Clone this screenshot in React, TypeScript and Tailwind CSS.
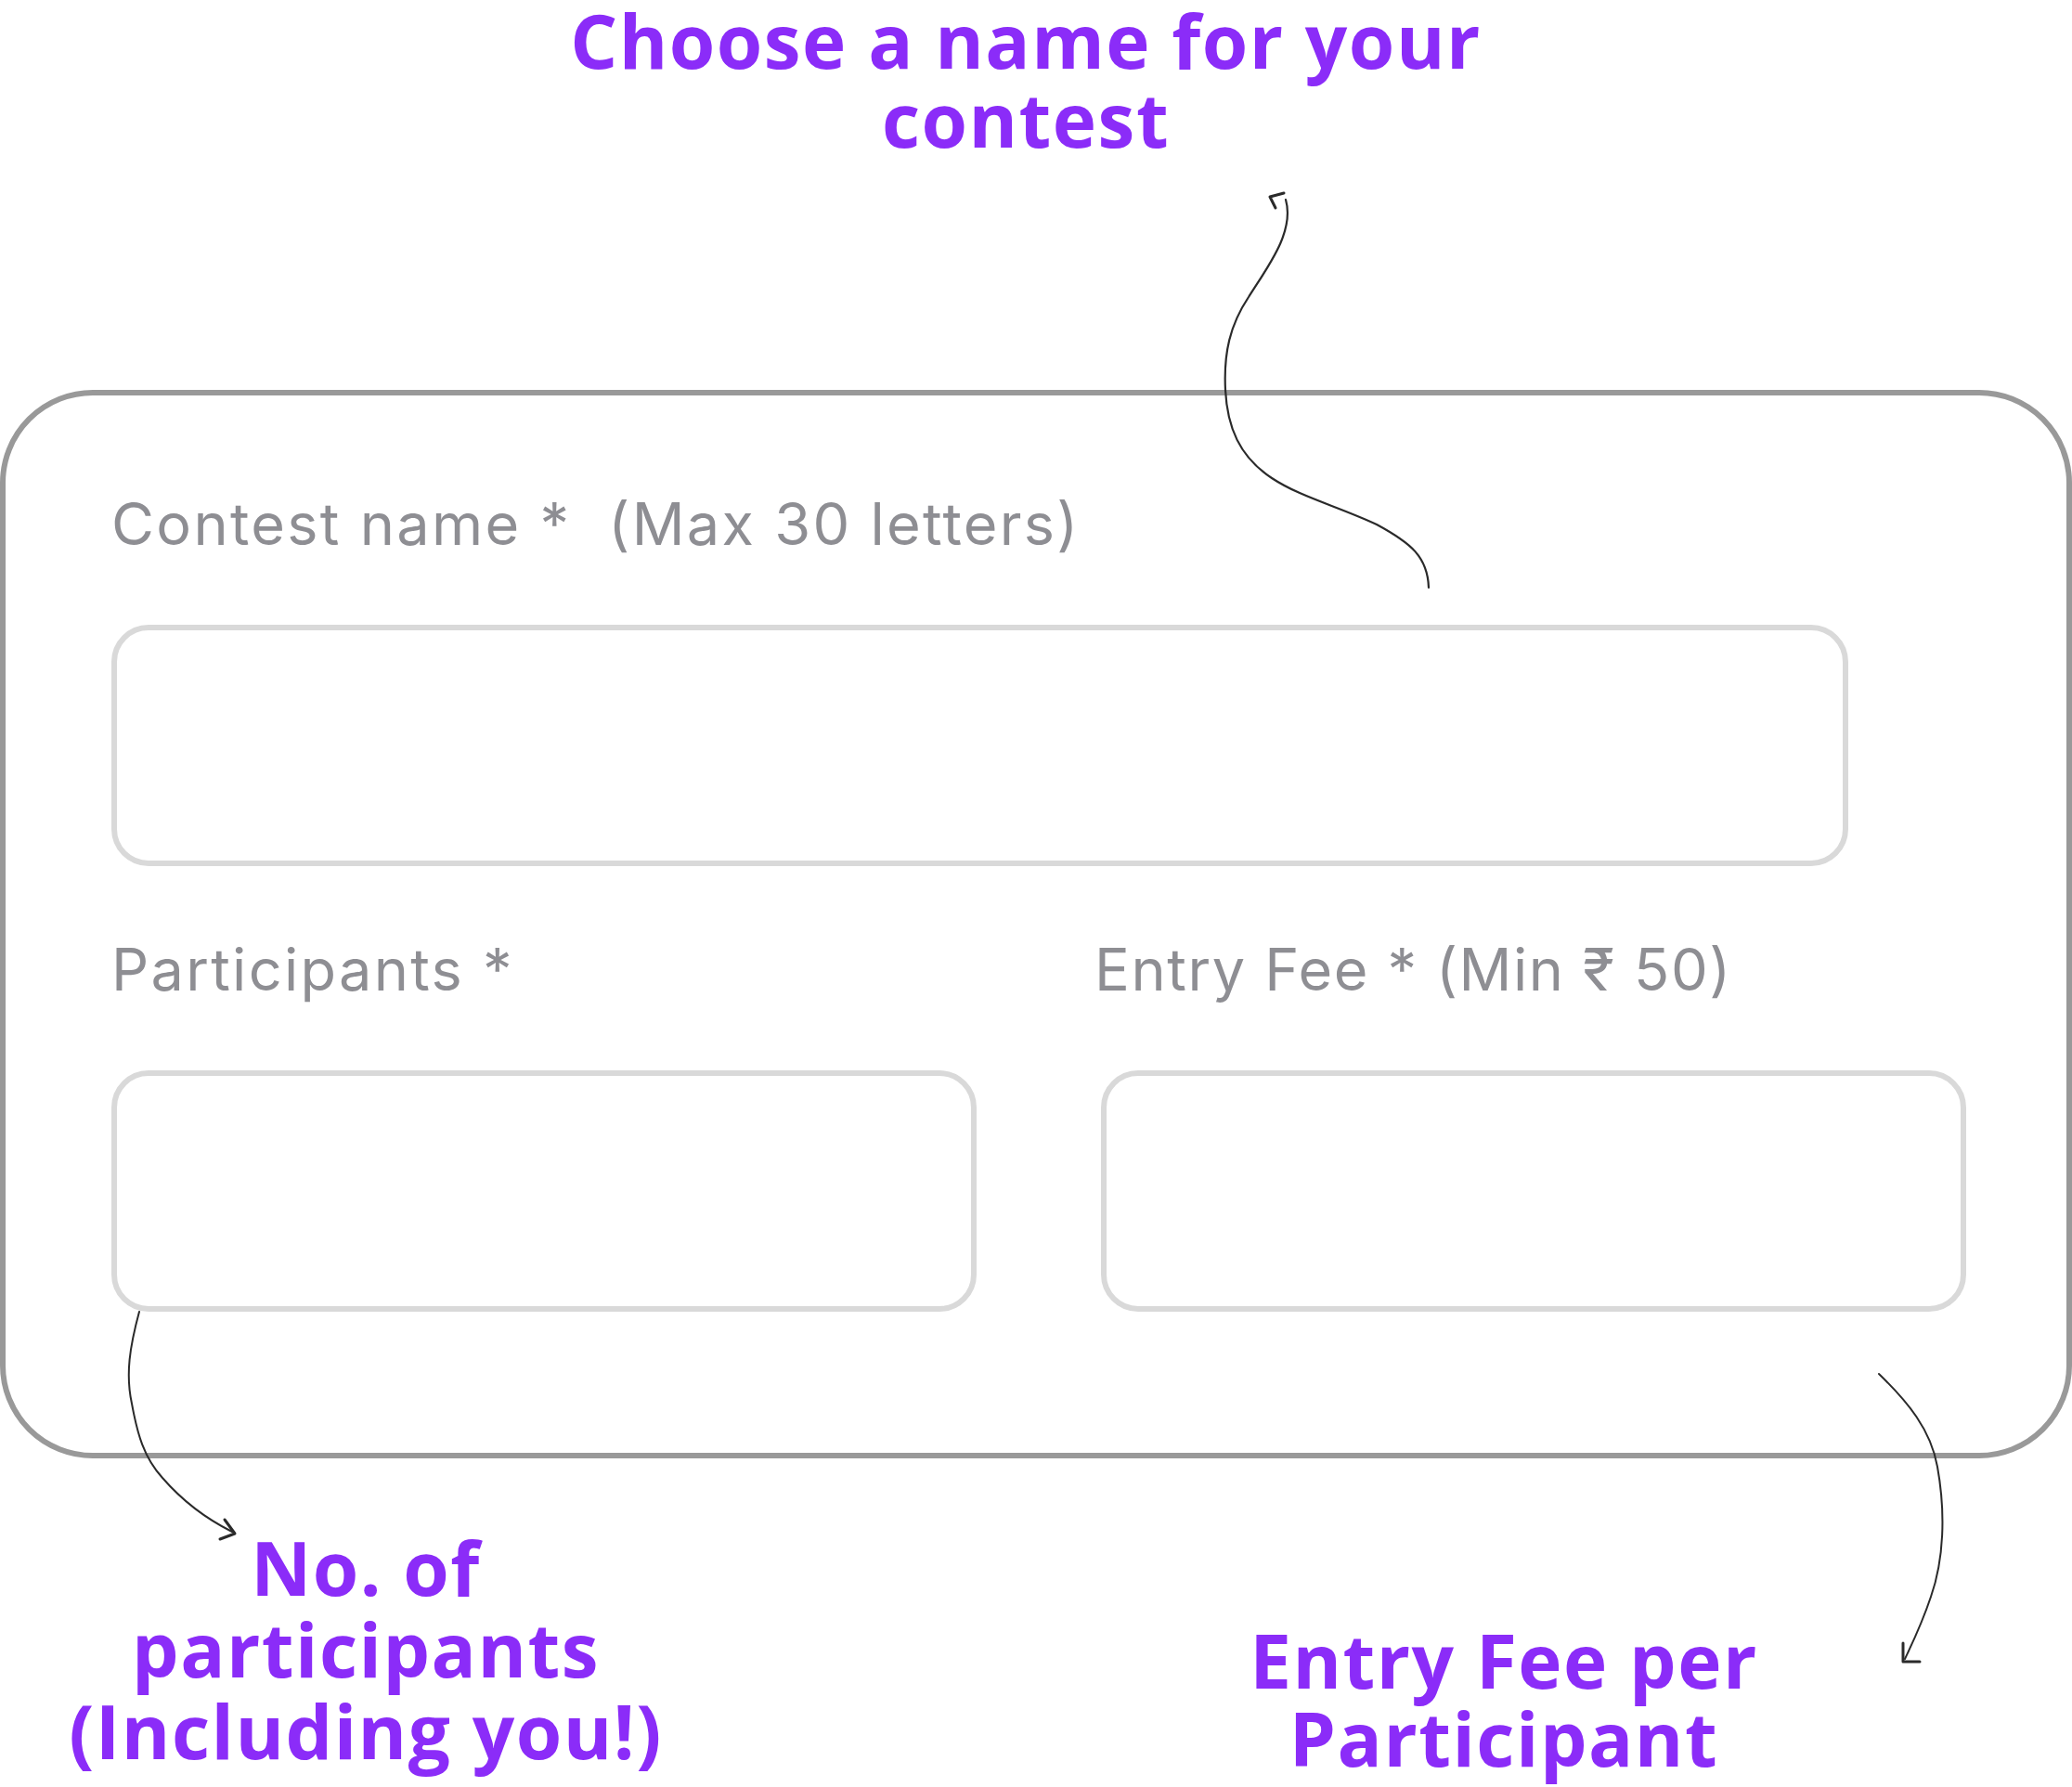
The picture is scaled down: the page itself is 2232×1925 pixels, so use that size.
import React from "react";

export default function App() {
  const purple = "text-[#8b2cf8]";
  return (
    <div className="relative w-[2232px] h-[1925px] bg-white overflow-hidden">
      {/* Title */}
      <div
        className={`w-[2210px] text-center font-bold text-[80px] leading-[85px] tracking-[1.5px] ${purple}`}
        style={{ fontFamily: '"Open Sans", sans-serif' }}
      >
        Choose a name for your
        <br />
        contest
      </div>

      {/* Card */}
      <div className="mt-[250px] w-[2232px] h-[1151px] rounded-[100px] border-[6px] border-[#999999] pl-[114px] pt-[100px]">
        <div style={{ fontFamily: '"Inter", "Noto Sans", sans-serif' }} className="text-[#8e8e93] tracking-[2.3px]">
          <div className="text-[63px] leading-[76px] whitespace-pre">Contest name *  (Max 30 letters)</div>
          <div className="mt-[71px] w-[1871px] h-[260px] rounded-[40px] border-[6px] border-[#d9d9d9]" />
          <div className="mt-[73px] flex gap-[134px]">
            <div className="w-[932px] flex flex-col">
              <div className="text-[63px] leading-[76px] whitespace-pre">Participants *</div>
              <div className="mt-[71px] w-[932px] h-[260px] rounded-[40px] border-[6px] border-[#d9d9d9]" />
            </div>
            <div className="w-[932px] flex flex-col">
              <div className="ml-[-7px] text-[63px] leading-[76px] whitespace-pre tracking-[1.6px]">Entry Fee * (Min ₹ 50)</div>
              <div className="mt-[71px] w-[932px] h-[260px] rounded-[40px] border-[6px] border-[#d9d9d9]" />
            </div>
          </div>
        </div>
      </div>

      {/* Bottom captions */}
      <div
        className={`mt-[73px] flex items-start font-bold text-[80px] tracking-[1.5px] ${purple}`}
        style={{ fontFamily: '"Open Sans", sans-serif' }}
      >
        <div className="w-[788px] text-center leading-[88px]">
          No. of
          <br />
          participants
          <br />
          (Including you!)
        </div>
        <div className="ml-[432px] mt-[102px] w-[800px] text-center leading-[84px]">
          Entry Fee per
          <br />
          Participant
        </div>
      </div>

      {/* Hand-drawn arrows */}
      <svg
        className="absolute left-0 top-0 pointer-events-none"
        width="2232"
        height="1925"
        viewBox="0 0 2232 1925"
        fill="none"
        stroke="#2a2a2a"
        strokeLinecap="round"
        strokeLinejoin="round"
      >
        <path
          d="M1539 633 C1538 600 1520 585 1483 565 C1440 545 1400 535 1370 515 C1335 492 1322 460 1320 420 C1318 380 1325 350 1345 320 C1365 288 1395 250 1385 215"
          strokeWidth="2.2"
        />
        <path d="M1383 208 L1368 212 L1374 224" strokeWidth="3" />
        <path
          d="M150 1413 C140 1450 135 1480 142 1512 C148 1545 155 1570 175 1592 C195 1615 220 1635 250 1650"
          strokeWidth="2"
        />
        <path d="M242 1637 L253 1652 L237 1658" strokeWidth="3" />
        <path
          d="M2024 1480 C2055 1510 2080 1540 2087 1580 C2096 1630 2094 1680 2080 1720 C2070 1750 2060 1770 2052 1787"
          strokeWidth="2"
        />
        <path d="M2050 1770 L2050 1790 L2068 1790" strokeWidth="3" />
      </svg>
    </div>
  );
}
